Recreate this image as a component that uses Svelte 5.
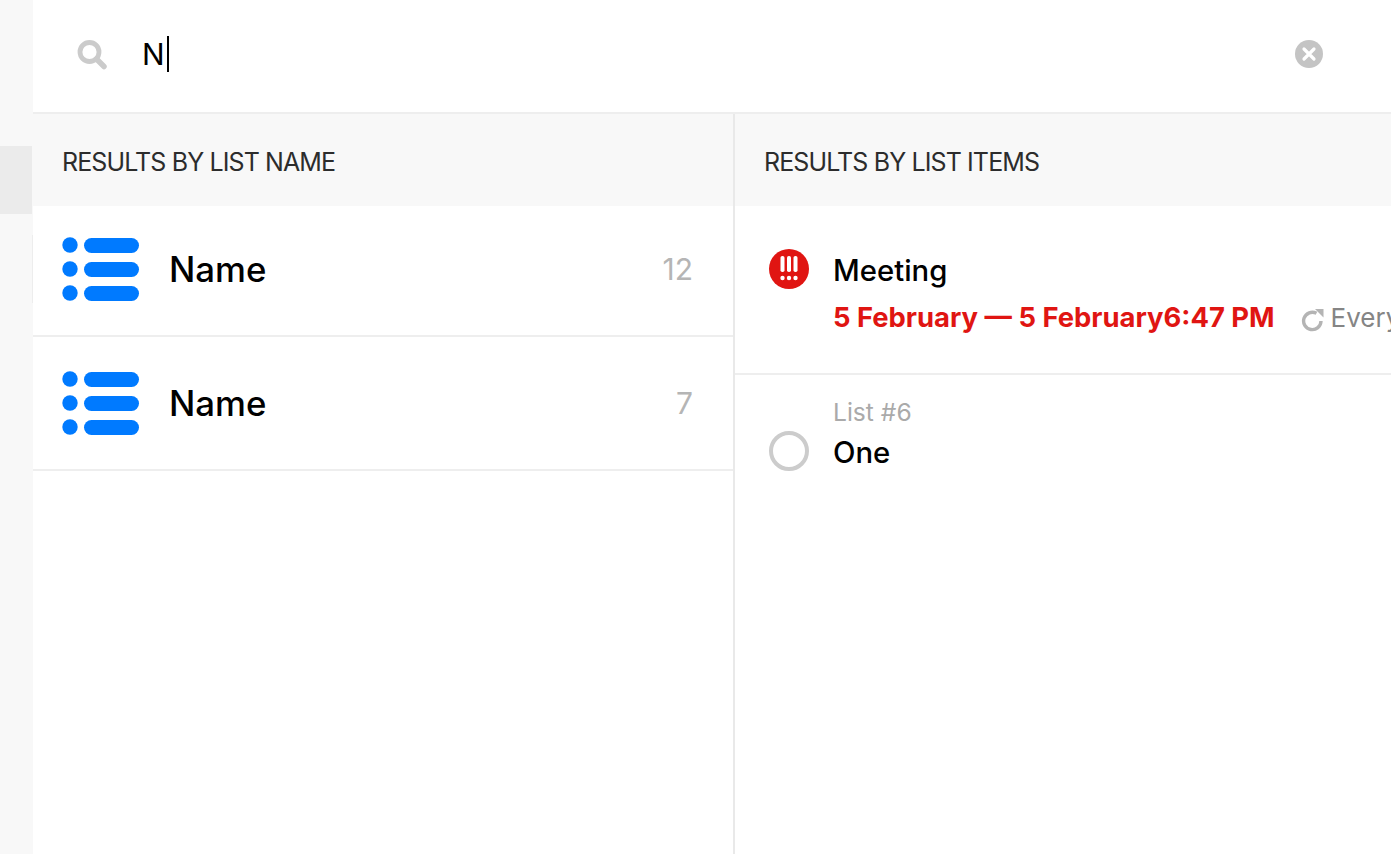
<script>
  const lists = [
    { name: 'Name', count: 12, cls: 'first' },
    { name: 'Name', count: 7, cls: 'second' }
  ];
</script>

<div class="page">
  <aside class="side">
    <div class="side-item active"></div>
    <div class="side-item edge"></div>
  </aside>
  <main class="main">
    <header class="search">
      <svg class="mag" width="32" height="32" viewBox="0 0 32 32" fill="none" stroke="#cbcbcb">
        <circle cx="13.5" cy="13" r="9.5" stroke-width="4.8" />
        <path d="M20.5 20 L28 27.5" stroke-width="5.5" stroke-linecap="round" />
      </svg>
      <div class="query">N<span class="caret"></span></div>
      <svg class="clear" width="28" height="28" viewBox="0 0 28 28">
        <circle cx="14" cy="14" r="14" fill="#c4c4c4" />
        <path d="M9 9 L19 19 M19 9 L9 19" stroke="#fff" stroke-width="3.2" stroke-linecap="round" />
      </svg>
    </header>
    <div class="cols">
      <section class="col left">
        <h2 class="head">RESULTS BY LIST NAME</h2>
        {#each lists as l}
          <div class="list-row {l.cls}">
            <svg class="list-icon" width="78" height="64" viewBox="0 0 78 64" fill="#007aff">
              <circle cx="8" cy="8" r="7.7" />
              <circle cx="8" cy="32" r="7.7" />
              <circle cx="8" cy="56" r="7.7" />
              <rect x="22" y="1" width="55" height="15" rx="7.5" />
              <rect x="22" y="25" width="55" height="15" rx="7.5" />
              <rect x="22" y="49" width="55" height="15" rx="7.5" />
            </svg>
            <span class="list-name">{l.name}</span>
            <span class="count">{l.count}</span>
          </div>
        {/each}
      </section>
      <section class="col right">
        <h2 class="head">RESULTS BY LIST ITEMS</h2>
        <div class="item meeting">
          <svg class="prio" width="40" height="40" viewBox="0 0 40 40">
            <circle cx="20" cy="20" r="20" fill="#e01512" />
            <g fill="#fff">
              <rect x="11.5" y="7" width="4" height="16" rx="1.8" />
              <rect x="18" y="7" width="4" height="16" rx="1.8" />
              <rect x="24.5" y="7" width="4" height="16" rx="1.8" />
              <circle cx="13.5" cy="29" r="2.2" />
              <circle cx="20" cy="29" r="2.2" />
              <circle cx="26.5" cy="29" r="2.2" />
            </g>
          </svg>
          <div class="item-body">
            <div class="title">Meeting</div>
            <div class="meta">
              <span class="date">5 February — 5 February6:47 PM</span>
              <svg class="repeat" width="24" height="24" viewBox="0 0 24 24" fill="none">
                <path d="M20 13 A8.7 8.7 0 1 1 15.5 5.3" stroke="#b4b4b4" stroke-width="3.4" />
                <path d="M14 1 H22.5 V9.5 Z" fill="#b4b4b4" />
              </svg>
              <span class="every">Every</span>
            </div>
          </div>
        </div>
        <div class="item one">
          <span class="ring"></span>
          <div class="item-body">
            <div class="sub">List #6</div>
            <div class="title">One</div>
          </div>
        </div>
      </section>
    </div>
  </main>
</div>

<style>
  :global(body) {
    margin: 0;
    background: #fff;
    overflow: hidden;
  }
  .page {
    display: flex;
    width: 1391px;
    height: 854px;
    overflow: hidden;
    font-family: Inter, "Liberation Sans", sans-serif;
    color: #000;
  }
  .side {
    flex: 0 0 33px;
    background: #f8f8f8;
    padding-top: 146px;
    box-sizing: border-box;
  }
  .side-item {
    height: 68px;
    box-sizing: border-box;
  }
  .active {
    width: 32px;
    background: #ebebeb;
  }
  .edge {
    margin-top: 21px;
    border-right: 1px solid #ededed;
  }
  .main {
    flex: 1;
    min-width: 0;
    display: flex;
    flex-direction: column;
  }
  .search {
    box-sizing: border-box;
    height: 114px;
    border-bottom: 2px solid #eeeeee;
    display: flex;
    align-items: center;
    padding: 0 68px 4px 43px;
    flex: none;
  }
  .mag {
    flex: none;
    margin-top: 2px;
  }
  .query {
    flex: 1;
    margin-left: 34px;
    font-size: 30px;
    line-height: 36px;
    display: flex;
    align-items: center;
    color: #000;
  }
  .caret {
    display: block;
    width: 2px;
    height: 36px;
    margin-left: 2px;
    background: #000;
  }
  .clear {
    flex: none;
  }
  .cols {
    flex: 1;
    display: flex;
    min-height: 0;
  }
  .col {
    min-width: 0;
  }
  .left {
    flex: 0 0 700px;
    border-right: 2px solid #e9e9e9;
  }
  .right {
    flex: 1;
    overflow: hidden;
  }
  .head {
    box-sizing: border-box;
    margin: 0;
    height: 92px;
    background: #f8f8f8;
    display: flex;
    align-items: center;
    padding: 3px 0 0 29px;
    font-size: 25px;
    font-weight: 400;
    letter-spacing: -0.88px;
    color: #2c2c2c;
    white-space: nowrap;
  }
  .list-row {
    display: flex;
    align-items: center;
    border-bottom: 2px solid #eeeeee;
    padding: 0 40px 0 29px;
  }
  .first {
    padding-bottom: 3px;
    height: 126px;
  }
  .second {
    height: 132px;
  }
  .list-icon {
    flex: none;
  }
  .list-name {
    margin-left: 29px;
    font-size: 34.8px;
    font-weight: 500;
    flex: 1;
  }
  .count {
    font-size: 30px;
    color: #b5b5b5;
  }
  .item {
    display: flex;
    padding-left: 34px;
    white-space: nowrap;
  }
  .meeting {
    border-bottom: 2px solid #eeeeee;
    padding-top: 43px;
    height: 124px;
  }
  .meeting .item-body {
    margin-top: 2px;
  }
  .prio {
    flex: none;
  }
  .item-body {
    margin-left: 24px;
  }
  .title {
    font-size: 29.3px;
    font-weight: 500;
    line-height: 40px;
  }
  .meta {
    display: flex;
    align-items: center;
    margin-top: 6px;
    height: 40px;
  }
  .date {
    font-size: 27.4px;
    font-weight: 700;
    color: #e01512;
  }
  .repeat {
    margin-left: 26px;
    margin-top: 6px;
    flex: none;
  }
  .every {
    margin-left: 6px;
    font-size: 26px;
    color: #858585;
  }
  .one {
    padding-top: 22px;
  }
  .ring {
    flex: none;
    width: 40px;
    height: 40px;
    margin-top: 34px;
    box-sizing: border-box;
    border: 4px solid #cccccc;
    border-radius: 50%;
  }
  .sub {
    font-size: 24.6px;
    line-height: 30px;
    color: #aaaaaa;
  }
  .one .title {
    margin-top: 6px;
  }
</style>
